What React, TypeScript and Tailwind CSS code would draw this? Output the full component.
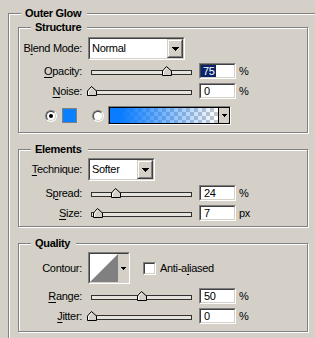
import React from "react";

interface BoxProps {
	className?: string;
	inner?: string;
	children?: React.ReactNode;
}

// two-pixel sunken edge, as on classic edit boxes
function Sunken({ className = "", inner = "", children }: BoxProps) {
	return (
		<div className={`shrink-0 border border-t-[#808080] border-l-[#808080] border-b-white border-r-white ${className}`}>
			<div className={`h-full w-full border border-t-[#404040] border-l-[#404040] border-b-[#d4d0c8] border-r-[#d4d0c8] ${inner}`}>
				{children}
			</div>
		</div>
	);
}

function Arrow({ small = false }: { small?: boolean }) {
	if (small) {
		return (
			<svg width="5" height="3" viewBox="0 0 5 3" shapeRendering="crispEdges">
				<rect x="0" y="0" width="5" height="1" fill="#000" />
				<rect x="1" y="1" width="3" height="1" fill="#000" />
				<rect x="2" y="2" width="1" height="1" fill="#000" />
			</svg>
		);
	}
	return (
		<svg width="7" height="4" viewBox="0 0 7 4" shapeRendering="crispEdges">
			<rect x="0" y="0" width="7" height="1" fill="#000" />
			<rect x="1" y="1" width="5" height="1" fill="#000" />
			<rect x="2" y="2" width="3" height="1" fill="#000" />
			<rect x="3" y="3" width="1" height="1" fill="#000" />
		</svg>
	);
}

function DropButton() {
	return (
		<div className="h-full w-[16px] shrink-0 border border-t-[#d4d0c8] border-l-[#d4d0c8] border-b-[#404040] border-r-[#404040]">
			<div className="flex h-full items-center justify-center border border-t-white border-l-white border-b-[#808080] border-r-[#808080] bg-[#d4d0c8]">
				<Arrow />
			</div>
		</div>
	);
}

function Label({ children }: { children: React.ReactNode }) {
	return <span className="w-[63px] shrink-0 text-right leading-[13px]">{children}</span>;
}

function U({ children }: { children: React.ReactNode }) {
	return <u className="underline underline-offset-[2px]">{children}</u>;
}

function Thumb({ pos }: { pos: number }) {
	return (
		<svg
			width="10"
			height="10"
			viewBox="0 0 10 10"
			className="absolute top-[3px]"
			style={{ left: pos - 4 }}
		>
			<path d="M4.5 0.5L9.5 5V9.5H0.5V5Z" fill="#d4d0c8" stroke="#000" strokeWidth="1" />
			<path d="M1.5 9V5.4L4.5 2.2" fill="none" stroke="#fff" strokeWidth="1" />
		</svg>
	);
}

interface SliderRowProps {
	label: React.ReactNode;
	value: string;
	pos: number;
	unit: string;
	selected?: boolean;
	className?: string;
}

function SliderRow({ label, value, pos, unit, selected, className = "" }: SliderRowProps) {
	return (
		<div className={`flex h-[16px] items-center ${className}`}>
			<Label>{label}</Label>
			<div className="relative ml-[9px] h-[16px] w-[101px] shrink-0">
				<div className="mt-[7px] h-[5px] border border-[#303030] bg-[#e6e3dd]" />
				<Thumb pos={pos} />
			</div>
			<Sunken className="ml-[7px] h-[16px] w-[37px]" inner="bg-white leading-[12px]">
				{selected ? (
					<span className="inline-block bg-[#0a246a] pl-[2px] pr-[1px] text-white">{value}</span>
				) : (
					<span className="pl-[3px]">{value}</span>
				)}
			</Sunken>
			<span className="ml-[3px] leading-[13px]">{unit}</span>
		</div>
	);
}

function Combo({ text, className }: { text: string; className: string }) {
	return (
		<Sunken className={`ml-[6px] h-[23px] ${className}`} inner="flex bg-white">
			<span className="flex-1 pl-[2px] leading-[19px]">{text}</span>
			<DropButton />
		</Sunken>
	);
}

interface GroupProps {
	title: string;
	className?: string;
	body: string;
	children: React.ReactNode;
}

function Group({ title, className = "", body, children }: GroupProps) {
	return (
		<fieldset className={`w-[290px] border border-[#808080] shadow-[1px_1px_0_#fff,inset_1px_1px_0_#fff] ${className}`}>
			<legend className="ml-[12px] bg-[#d4d0c8] pl-[4px] pr-[6px] font-bold leading-[13px]">{title}</legend>
			<div className={`flex flex-col ${body}`}>{children}</div>
		</fieldset>
	);
}

function Radio({ checked = false }: { checked?: boolean }) {
	return (
		<div className="h-[12px] w-[12px] shrink-0 rounded-full border border-t-[#808080] border-l-[#808080] border-b-white border-r-white">
			<div className="flex h-full w-full items-center justify-center rounded-full border border-t-[#404040] border-l-[#404040] border-b-[#d4d0c8] border-r-[#d4d0c8] bg-white">
				{checked && <div className="h-[4px] w-[4px] rounded-full bg-black" />}
			</div>
		</div>
	);
}

export default function App() {
	return (
		<div className="h-[338px] w-[315px] overflow-hidden bg-[#d4d0c8] pl-[8px] pt-[7px] font-['Liberation_Sans',Arial,sans-serif] text-[11px] tracking-[-0.3px] text-black">
			<fieldset className="h-[360px] w-[330px] border border-[#808080] shadow-[1px_1px_0_#fff,inset_1px_1px_0_#fff]">
				<legend className="ml-[12px] bg-[#d4d0c8] pl-[4px] pr-[6px] font-bold leading-[13px]">Outer Glow</legend>
				<div className="flex flex-col pl-[9px] pt-[1px]">
					{/* Structure */}
					<Group title="Structure" body="h-[98px] pt-[3px]">
						<div className="flex h-[23px] items-center">
							<Label>
								B<U>l</U>end Mode:
							</Label>
							<Combo text="Normal" className="w-[97px]" />
						</div>
						<SliderRow
							className="mt-[3px]"
							label={
								<>
									<U>O</U>pacity:
								</>
							}
							value="75"
							pos={75}
							unit="%"
							selected
						/>
						<SliderRow
							className="mt-[4px]"
							label={
								<>
									<U>N</U>oise:
								</>
							}
							value="0"
							pos={0}
							unit="%"
						/>
						<div className="mt-[7px] flex h-[19px] items-center">
							<div className="ml-[26px]">
								<Radio checked />
							</div>
							<div className="ml-[5px] h-[15px] w-[15px] border border-[#808080] bg-[#0a80ff]" />
							<div className="ml-[15px]">
								<Radio />
							</div>
							<div className="ml-[4px] h-[19px] w-[123px] border border-t-[#808080] border-l-[#808080] border-b-white border-r-white">
								<div className="flex h-full border border-black">
									<div className="flex-1 [background-image:linear-gradient(to_right,#0a7cff_10%,rgba(10,124,255,0)),repeating-conic-gradient(#c8c8c8_0_25%,#ffffff_0_50%)] [background-size:100%_100%,8px_8px]" />
									<div className="flex w-[11px] items-center justify-center border-l border-black bg-[#d4d0c8]">
										<Arrow small />
									</div>
								</div>
							</div>
						</div>
					</Group>

					{/* Elements */}
					<Group title="Elements" className="mt-[10px]" body="h-[70px] pt-[2px]">
						<div className="flex h-[23px] items-center">
							<Label>
								<U>T</U>echnique:
							</Label>
							<Combo text="Softer" className="w-[67px]" />
						</div>
						<SliderRow
							className="mt-[4px]"
							label={
								<>
									S<U>p</U>read:
								</>
							}
							value="24"
							pos={24}
							unit="%"
						/>
						<SliderRow
							className="mt-[4px]"
							label={
								<>
									<U>S</U>ize:
								</>
							}
							value="7"
							pos={6}
							unit="px"
						/>
					</Group>

					{/* Quality */}
					<Group title="Quality" className="mt-[10px]" body="h-[81px] pt-[2px]">
						<div className="flex h-[32px] items-center">
							<Label>Contour:</Label>
							<Sunken className="ml-[6px] h-[32px] w-[42px]" inner="flex bg-white">
								<svg width="28" height="28" viewBox="0 0 28 28" className="shrink-0">
									<polygon points="0,28 28,0 28,28" fill="#808080" />
								</svg>
								<div className="flex flex-1 items-center justify-center bg-[#d4d0c8]">
									<Arrow small />
								</div>
							</Sunken>
							<Sunken className="ml-[13px] h-[13px] w-[13px]" inner="bg-white" />
							<span className="ml-[4px] leading-[13px]">
								Anti-a<U>l</U>iased
							</span>
						</div>
						<SliderRow
							className="mt-[4px]"
							label={
								<>
									<U>R</U>ange:
								</>
							}
							value="50"
							pos={50}
							unit="%"
						/>
						<SliderRow
							className="mt-[4px]"
							label={
								<>
									<U>J</U>itter:
								</>
							}
							value="0"
							pos={0}
							unit="%"
						/>
					</Group>
				</div>
			</fieldset>
		</div>
	);
}
